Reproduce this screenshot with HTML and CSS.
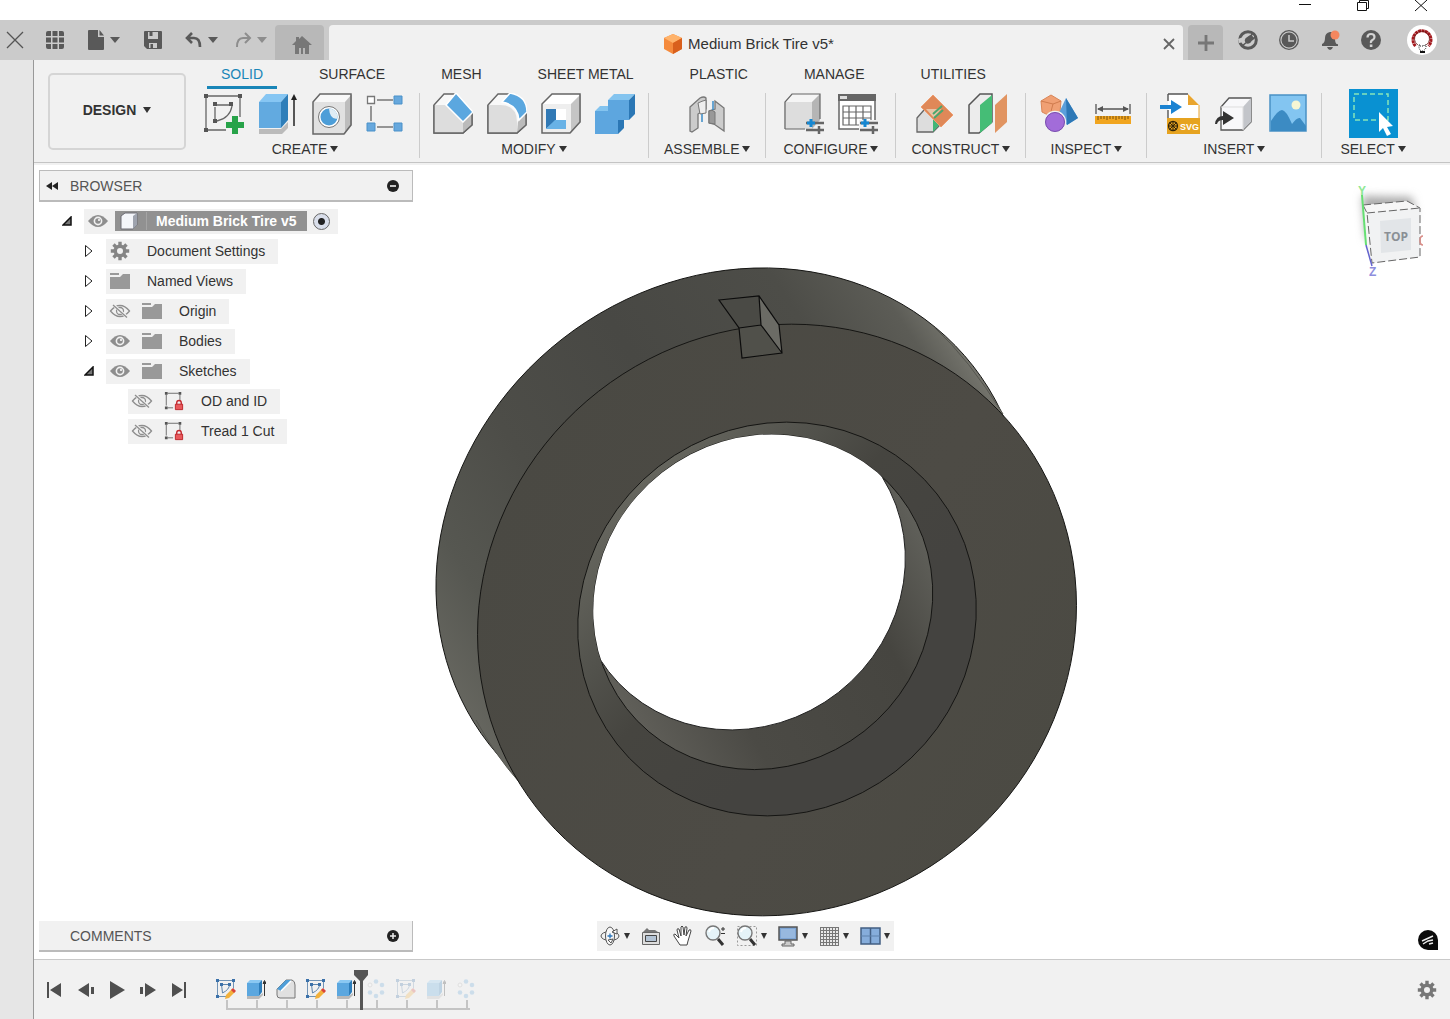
FILE: index.html
```html
<!DOCTYPE html>
<html lang="en">
<head>
<meta charset="utf-8">
<meta name="viewport" content="width=device-width, initial-scale=1">
<title>Medium Brick Tire v5*</title>
<link rel="stylesheet" href="styles.css">
</head>
<body>
<svg class="defs" aria-hidden="true">
  <symbol id="eye" viewBox="0 0 22 20"><path d="M1 10Q6 4 11 4T21 10Q16 16 11 16T1 10Z" fill="#8e8e8e"/><circle cx="11" cy="10" r="4.400" fill="#f1f1f1"/><circle cx="11" cy="10" r="2.800" fill="#8e8e8e"/><circle cx="12" cy="9" r="1" fill="#fff"/></symbol>
  <symbol id="eye-off" viewBox="0 0 22 20"><path d="M1.500 10Q6 4.500 11 4.500T20.500 10Q16 15.500 11 15.500T1.500 10Z" fill="none" stroke="#8e8e8e" stroke-width="1.300"/><circle cx="11" cy="10" r="3.500" fill="none" stroke="#8e8e8e" stroke-width="1.300"/><path d="M4 3.500 19 17" stroke="#f1f1f1" stroke-width="3"/><path d="M4 4 18 16.500" stroke="#8e8e8e" stroke-width="1.300"/></symbol>
  <symbol id="folder" viewBox="0 0 22 20"><path d="M1 2h9v2H1zM1 6h10l3-3h7v15H1z" fill="#999"/></symbol>
  <symbol id="gear" viewBox="0 0 20 20"><g fill="currentColor"><path fill-rule="evenodd" d="M10 3.500a6.500 6.500 0 1 0 0 13a6.500 6.500 0 1 0 0-13zM10 7a3 3 0 1 1 0 6a3 3 0 1 1 0-6z"/><g id="teeth"><path d="M8.300 0.800h3.400v3.500H8.300zM8.300 15.700h3.400v3.500H8.300zM.8 8.300h3.500v3.400H.8zM15.700 8.300h3.500v3.400h-3.500z"/></g><use href="#teeth" transform="rotate(45 10 10)"/></g></symbol>
  <symbol id="sketch-locked" viewBox="0 0 22 22"><path d="M4 2.500h12M2.500 4v12M17.500 4v7M4 18.500h6" stroke="#666" fill="none"/><path d="M1 1h3v3H1zM16 1h3v3h-3zM1 17h3v3H1z" fill="#555"/><path d="M14 15v-2q0-2.500 2.500-2.500T19 13v2" fill="none" stroke="#c5272d" stroke-width="1.500"/><path d="M12.500 14.500h8v6h-8z" fill="#e8595c" stroke="#b92026"/></symbol>
  <symbol id="tl-sketch" viewBox="0 0 20 20"><path d="M1.500 1.500h16v8M1.500 1.500v16h9" fill="none" stroke="#7193b5"/><path d="M5.500 5.500h8q0 5-7 8.500z" fill="none" stroke="#5d84ac"/><path d="M0 0h3v3H0zM16 0h3v3h-3zM0 16h3v3H0zM4 4h3v3H4zM12 4h3v3h-3z" fill="#3a71aa"/><path d="m10 16 6-6 3 3-6 6-4 1z" fill="#f2b13c"/><path d="m15 11 2-2 3 3-2 2z" fill="#d9423a"/></symbol>
  <symbol id="tl-extrude" viewBox="0 0 20 20"><path d="M1 17h12l4-3v2l-4 4H1z" fill="#b9b9b9"/><path d="M1 4h12v13H1z" fill="#5ba7df"/><path d="m1 4 3-3h12l-3 3z" fill="#8ac8f2"/><path d="m13 4 3-3v12l-3 4z" fill="#2c7dbb"/><path d="M18.500 17V3M17 4.500l1.500-3 1.500 3z" stroke="#333" fill="#333"/></symbol>
  <symbol id="tl-chamfer" viewBox="0 0 20 20"><path d="M1 10 10 1h6q3 1 3 5v13H4q-3 0-3-3z" fill="#e0e0e0" stroke="#777"/><path d="m1 10 9-9h5L5 12z" fill="#4f9fd9"/><path d="m5 12 10-10" stroke="#fff" stroke-width="1.500"/></symbol>
  <symbol id="tl-pattern" viewBox="0 0 20 20"><g fill="#63a6d9"><circle cx="10" cy="2.500" r="2.300"/><circle cx="16" cy="6" r="2.300"/><circle cx="16" cy="13.500" r="2.300"/><circle cx="10" cy="17" r="2.300"/><circle cx="4" cy="13.500" r="2.300"/></g><circle cx="4" cy="6" r="2" fill="#fff" stroke="#aaa"/></symbol>
  <symbol id="magnifier" viewBox="0 0 22 22"><path d="m14 14 5 6" stroke="#333" stroke-width="3"/><circle cx="9" cy="8" r="7" fill="#e5f3f8" stroke="#777" stroke-width="1.400"/><path d="M5 7q1-4 5-4" fill="none" stroke="#fff" stroke-width="2"/></symbol>
  <linearGradient id="tread" x1="460" y1="740" x2="1000" y2="390" gradientUnits="userSpaceOnUse"><stop offset="0" stop-color="#6a6a63"/><stop offset=".15" stop-color="#565751"/><stop offset=".32" stop-color="#4d4d48"/><stop offset=".55" stop-color="#484844"/><stop offset=".8" stop-color="#4d4d48"/><stop offset=".93" stop-color="#5c5c56"/><stop offset="1" stop-color="#7a7a72"/></linearGradient>
  <linearGradient id="face" x1="500" y1="500" x2="1050" y2="800" gradientUnits="userSpaceOnUse"><stop offset="0" stop-color="#4a4943"/><stop offset=".6" stop-color="#4d4b45"/><stop offset="1" stop-color="#4b4a43"/></linearGradient>
  <linearGradient id="chamfer" x1="580" y1="520" x2="800" y2="720" gradientUnits="userSpaceOnUse"><stop offset="0" stop-color="#6a6a62"/><stop offset=".35" stop-color="#53534d"/><stop offset=".6" stop-color="#464540"/><stop offset="1" stop-color="#444340"/></linearGradient>
  <linearGradient id="bore" x1="610" y1="700" x2="930" y2="530" gradientUnits="userSpaceOnUse"><stop offset="0" stop-color="#62615b"/><stop offset=".3" stop-color="#4b4a45"/><stop offset=".75" stop-color="#464540"/><stop offset="1" stop-color="#62625c"/></linearGradient>
</svg>

<div class="app">
  <header class="window-bar">
    <button type="button" aria-label="Minimize"><svg width="14" height="12" viewBox="0 0 14 12"><path d="M1 4.500h12" stroke="#111"/></svg></button>
    <button type="button" aria-label="Restore"><svg width="14" height="12" viewBox="0 0 14 12"><path d="M1.500 2.500h9v8h-9zM3.500 2V.5h9v8H11" fill="none" stroke="#111"/></svg></button>
    <button type="button" aria-label="Close window"><svg width="14" height="12" viewBox="0 0 14 12"><path d="m1 0 12 11M13 0 1 11" stroke="#111"/></svg></button>
  </header>

  <div class="tab-bar">
    <div class="quick-tools">
      <button type="button" class="quick quick-close" aria-label="Close panel"><svg width="18" height="18" viewBox="0 0 18 18"><path d="m1 1 16 16M17 1 1 17" stroke="#555" stroke-width="1.300"/></svg></button>
      <button type="button" class="quick" aria-label="Data panel"><svg width="18" height="18" viewBox="0 0 18 18"><path fill="#595959" d="M0 2q0-2 2-2h3v5H0zM6.500 0h5v5h-5zM13 0h3q2 0 2 2v3h-5zM0 6.500h5v5H0zM6.500 6.500h5v5h-5zM13 6.500h5v5h-5zM0 13h5v5H2q-2 0-2-2zM6.500 13h5v5h-5zM13 13h5v3q0 2-2 2h-3z"/></svg></button>
      <button type="button" class="quick" aria-label="File"><svg width="18" height="20" viewBox="0 0 18 20"><path fill="#595959" d="M1 1q0-1 1-1h9v7h6v12q0 1-1 1H2q-1 0-1-1zM12.500 0 17 5.500h-4.500z"/></svg><span class="caret large"></span></button>
      <button type="button" class="quick" aria-label="Save"><svg width="18" height="18" viewBox="0 0 18 18"><path fill="#595959" fill-rule="evenodd" d="M1 0h16q1 0 1 1v16q0 1-1 1H3l-3-3V1q0-1 1-1zM4 1h10v7H4zM5 12h8v5H5z"/><path fill="#595959" d="M5.500 1h3v4h-3zM6.500 13h2.500v4H6.500z"/></svg></button>
      <button type="button" class="quick" aria-label="Undo"><svg width="18" height="18" viewBox="0 0 18 18"><path d="m7 2-5 5 5 5M2 7h7q6 0 6 9" fill="none" stroke="#595959" stroke-width="2.600"/></svg><span class="caret large"></span></button>
      <button type="button" class="quick muted" aria-label="Redo"><svg width="18" height="18" viewBox="0 0 18 18"><path d="m11 2 5 5-5 5M16 7H9q-6 0-6 9" fill="none" stroke="#8d8d8d" stroke-width="2"/></svg><span class="caret large"></span></button>
    </div>
    <button type="button" class="side-tab home-tab" aria-label="Home"><svg width="20" height="18" viewBox="0 0 20 18"><path fill="#777" d="M10 0 20 9h-3v9h-4v-6h-2v6H9v-6H7v6H3V9H0l4-4V1h3v2z"/></svg></button>
    <div class="doc-tab">
      <span class="doc-title"><svg width="20" height="20" viewBox="0 0 20 20"><path fill="#f58a3c" d="m10 0 9 4v11l-9 5-9-5V4z"/><path fill="#ffb36b" d="m10 0 9 4-9 5-9-5z"/><path fill="#d9601d" d="M10 9v11l9-5V4z"/></svg>Medium Brick Tire v5*</span>
      <button type="button" class="doc-close" aria-label="Close document"><svg width="12" height="12" viewBox="0 0 12 12"><path d="m1 1 10 10M11 1 1 11" stroke="#666" stroke-width="1.800"/></svg></button>
    </div>
    <button type="button" class="side-tab add-tab" aria-label="New document"><svg width="16" height="16" viewBox="0 0 16 16"><path d="M8 0v16M0 8h16" stroke="#777" stroke-width="2.800"/></svg></button>
    <div class="account">
      <button type="button" aria-label="Extensions"><svg width="20" height="20" viewBox="0 0 20 20"><circle cx="10" cy="10" r="8.300" fill="none" stroke="#595959" stroke-width="3"/><path d="M0 9 8 6l-2 6-5 1z" fill="#ccc"/><path d="m7 8 4-4q2-1 4 1t1 4l-4 4q-3 2-5 0t0-5z" fill="#ccc"/><path d="m8 9 4-3q2 0 3 2l-3 4q-3 2-4 0t0-3zM12 7l3-4M14 10l4-4M9 12l-5 4" fill="#595959" stroke="#595959" stroke-width="1.600"/></svg></button>
      <button type="button" aria-label="Job status"><svg width="20" height="20" viewBox="0 0 20 20"><circle cx="10" cy="10" r="9.300" fill="none" stroke="#595959" stroke-width="1.300"/><circle cx="10" cy="10" r="7.500" fill="#595959"/><path d="M10 5v6h5" fill="none" stroke="#ccc" stroke-width="1.500"/></svg></button>
      <button type="button" aria-label="Notifications"><svg width="20" height="20" viewBox="0 0 20 20"><path d="M2 16v-2q3-1 3-6t5-6 5 6 3 6v2z" fill="#595959"/><path d="M7 17h6q-1 3-3 3t-3-3z" fill="#595959"/><circle cx="15" cy="5" r="4.500" fill="#f5875f"/></svg></button>
      <button type="button" aria-label="Help"><svg width="20" height="20" viewBox="0 0 20 20"><circle cx="10" cy="10" r="10" fill="#595959"/><path d="M6.500 7.500q0-3.500 3.500-3.500t3.500 3q0 2-2 3t-1.500 3" fill="none" stroke="#d4d4d4" stroke-width="2.200"/><path d="M8.800 14.500h2.600V17H8.800z" fill="#d4d4d4"/></svg></button>
      <button type="button" class="avatar" aria-label="Account"><svg width="30" height="30" viewBox="0 0 30 30"><circle cx="15" cy="15" r="15" fill="#fff"/><path d="M8.500 21A9 9 0 1 1 21.500 21" fill="none" stroke="#a3191e" stroke-width="3" stroke-dasharray="3 .4"/><path d="M11 20A7.500 7.500 0 1 1 19 20" fill="none" stroke="#611" stroke-width=".7"/><path d="M12 20h1v1h4v-1h2v3q-2 3-4 3t-3-3z" fill="none" stroke="#222" stroke-dasharray="1 1"/><path d="M13 26h5v2h-5z" fill="#111"/></svg></button>
    </div>
  </div>

  <div class="shell">
    <aside class="gutter"></aside>
    <div class="editor">
      <section class="ribbon">
        <button type="button" class="workspace">DESIGN <span class="caret"></span></button>
        <div class="ribbon-body">
          <nav class="ribbon-tabs">
            <button type="button" class="ribbon-tab active">SOLID</button>
            <button type="button" class="ribbon-tab">SURFACE</button>
            <button type="button" class="ribbon-tab">MESH</button>
            <button type="button" class="ribbon-tab">SHEET METAL</button>
            <button type="button" class="ribbon-tab">PLASTIC</button>
            <button type="button" class="ribbon-tab">MANAGE</button>
            <button type="button" class="ribbon-tab">UTILITIES</button>
          </nav>
          <div class="groups">
            <div class="group">
              <div class="tools">
                <button type="button" aria-label="Create sketch"><svg class="tool" viewBox="0 0 40 42"><path d="M4 3h31M2 5v30M36 5v19M4 37h18" stroke="#666" fill="none" stroke-width="1.300"/><path d="M13 12h13M11 14v12M28 13q-2 12-15 15" stroke="#666" fill="none" stroke-width="1.300"/><path d="M0 1h4v4H0zM34 1h4v4h-4zM0 35h4v4H0zM9 9h4v4H9zM25 9h4v4h-4zM9 26h4v4H9z" fill="#555"/><path d="M28 23h6v6h6v6h-6v6h-6v-6h-6v-6h6z" fill="#27a349"/></svg></button>
                <button type="button" aria-label="Extrude"><svg class="tool" viewBox="0 0 40 42"><path d="M1 36h22l7-7v6l-6 6H1z" fill="#bbb"/><path d="M1 9h22v26H1z" fill="#62aae0"/><path d="m1 9 7-8h22l-7 8z" fill="#86c6f3"/><path d="m23 9 7-8v26l-7 8z" fill="#2e7eb9"/><path d="M36 33V5" stroke="#222" stroke-width="1.500"/><path d="m36 1 3 6h-6z" fill="#222"/></svg></button>
                <button type="button" aria-label="Hole"><svg class="tool" viewBox="0 0 40 42"><path d="M1 9h32v32H1z" fill="#e1e1e1"/><path d="m1 9 7-8h32l-7 8z" fill="#f8f8f8"/><path d="m33 9 7-8v31l-7 9z" fill="#bdbdbd"/><path d="m1 9 7-8h31v31l-7 9H1z" fill="none" stroke="#666" stroke-width="1.500"/><circle cx="17" cy="24" r="10.500" fill="#fff" stroke="#777"/><circle cx="17" cy="24" r="8.500" fill="#4d9ed8"/><path d="M17 15.500a8.500 8.500 0 0 1 8.500 10Q18 27 17 15.500" fill="#e0edf5"/></svg></button>
                <button type="button" aria-label="Pattern"><svg class="tool" viewBox="0 0 40 42"><path d="M11 7h16M5 13v15M11 34h16" stroke="#777" stroke-width="1.500"/><path d="M1.500 3.500h7v7h-7z" fill="#fff" stroke="#777" stroke-width="1.300"/><path d="M28 3h8v8h-8zM1 30h8v8H1zM28 30h8v8h-8z" fill="#67a8dd" stroke="#4a91c9"/></svg></button>
              </div>
              <button type="button" class="group-label">CREATE <span class="caret"></span></button>
            </div>
            <div class="group">
              <div class="tools">
                <button type="button" aria-label="Chamfer"><svg class="tool" viewBox="0 0 40 42"><path d="M1 12 11 1h10l18 19v12l-9 8H1z" fill="#f8f8f8" stroke="#666" stroke-width="1.400"/><path d="M1 12h12l17 16v12H1z" fill="#ddd"/><path d="m30 28 9-9v13l-9 8z" fill="#bbb"/><path d="M1 12v28h29l9-8V20" fill="none" stroke="#666" stroke-width="1.400"/><path d="m13 12 10-12 17 19-10 10z" fill="#5ba7df" stroke="#fff" stroke-width="1.500"/></svg></button>
                <button type="button" aria-label="Fillet"><svg class="tool" viewBox="0 0 40 42"><path d="M1 12 11 1h12q16 2 16 19v12l-9 8H1z" fill="#f8f8f8" stroke="#666" stroke-width="1.400"/><path d="M1 12h12q17 0 17 17v11H1z" fill="#ddd"/><path d="m31 28 8-8v12l-9 8z" fill="#bbb"/><path d="M1 12v28h29l9-8V20" fill="none" stroke="#666" stroke-width="1.400"/><path d="m15 9 8-9q17 3 17 19l-8 8q-1-15-17-18z" fill="#5ba7df" stroke="#fff" stroke-width="1.500"/></svg></button>
                <button type="button" aria-label="Shell"><svg class="tool" viewBox="0 0 40 42"><path d="M1 11h29v29H1z" fill="#eee"/><path d="m1 11 10-10h29l-10 10z" fill="#fff"/><path d="m30 11 10-10v28l-10 11z" fill="#c5c5c5"/><path d="M1 11 11 1h28v28L29 40H1z" fill="none" stroke="#666" stroke-width="1.500"/><path d="M5 16h20v20H5z" fill="#fff"/><path d="M5 16h10v11l-10 9z" fill="#3179b5"/><path d="m5 36 9-9h11v9z" fill="#68b2e6"/></svg></button>
                <button type="button" aria-label="Combine"><svg class="tool" viewBox="0 0 40 42"><path d="M0 18h13V7h21v20H23v14H0z" fill="#5da6df"/><path d="m0 18 5-5h8v5zM13 7l6-6h21l-6 6z" fill="#84c4ef"/><path d="m34 7 6-6v20l-6 6zM23 27h6v8l-6 6z" fill="#2b77b5"/></svg></button>
              </div>
              <button type="button" class="group-label">MODIFY <span class="caret"></span></button>
            </div>
            <div class="group">
              <div class="tools">
                <button type="button" aria-label="Joint"><svg class="tool" viewBox="0 0 40 42"><path d="m3 14 10-9q4-2 6 0v11l-8 5v14l-6 4-2-1z" fill="#ccc" stroke="#777" stroke-width="1.300"/><path d="M11 10q4-2 8-3v13l-6 1z" fill="#eee" stroke="#777"/><path d="m28 8 9 7v23l-10-7-5-1V18l6-2z" fill="#ccc" stroke="#777" stroke-width="1.300"/><path d="M22 18q3-2 6 1v12l-6-1z" fill="#999" stroke="#777"/><path d="M15 21v8M26 8v9" stroke="#3b8cc8" stroke-width="1.500"/></svg></button>
              </div>
              <button type="button" class="group-label">ASSEMBLE <span class="caret"></span></button>
            </div>
            <div class="group configure-group">
              <div class="tools">
                <button type="button" aria-label="Configure"><svg class="tool" viewBox="0 0 40 42"><path d="M0 9h28v27H0z" fill="#ddd"/><path d="m0 9 8-8h28l-8 8z" fill="#f5f5f5"/><path d="m28 9 8-8v26l-8 9z" fill="#b5b5b5"/><path d="M1 36V9l7-8h28v25M1 36h20" fill="none" stroke="#666" stroke-width="1.200"/><path d="M22 30h18M22 37h18" stroke="#666" stroke-width="2.500"/><path d="M35 33v8" stroke="#666" stroke-width="2.500"/><path d="M27 26v8M23 30h8" stroke="#1687d1" stroke-width="3"/></svg></button>
                <button type="button" aria-label="Configuration table"><svg class="tool" viewBox="0 0 40 42"><path d="M1 7h36v29H1z" fill="#fff" stroke="#666" stroke-width="1.500"/><path d="M0 1h38v7H0z" fill="#666"/><path d="M2 3h7v3H2z" fill="#ddd"/><path d="M5 13h28v19H5zM5 19h28M5 25h28M11 13v19M18 13v19M25 13v19" fill="none" stroke="#666" stroke-width="1.200"/><path d="M21 27h19v15H21z" fill="#f1f1f1"/><path d="M22 30h18M22 37h18M35 33v8" stroke="#666" stroke-width="2.500"/><path d="M27 26v8M23 30h8" stroke="#1687d1" stroke-width="3"/></svg></button>
              </div>
              <button type="button" class="group-label">CONFIGURE <span class="caret"></span></button>
            </div>
            <div class="group">
              <div class="tools">
                <button type="button" aria-label="Offset plane"><svg class="tool" viewBox="0 0 40 42"><path d="m3 25 7-8h15v16l-6 6H3z" fill="#ddd" stroke="#666" stroke-width="1.300"/><path d="m19 25 8-10v15l-8 9z" fill="#43b577"/><path d="M19 2 39 22 27 34 7 14z" fill="#df8858" stroke="#ee9d70"/><path d="M12 16h15l-7 9z" fill="#e8c4a6"/><path d="m19 21 9-8M20 25l9-8" stroke="#4ba76d" stroke-width="2"/></svg></button>
                <button type="button" aria-label="Midplane"><svg class="tool" viewBox="0 0 40 42"><path d="M1 12 12 1h12v28l-13 11H1z" fill="#ececec" stroke="#555" stroke-width="1.500"/><path d="m12 12 12-10v28L12 40z" fill="#45bd76"/><path d="m27 12 12-11v28L27 40z" fill="#e19461"/></svg></button>
              </div>
              <button type="button" class="group-label">CONSTRUCT <span class="caret"></span></button>
            </div>
            <div class="group">
              <div class="tools">
                <button type="button" aria-label="Inspect shapes"><svg class="tool" viewBox="0 0 40 42"><path d="m2 8 10-6 10 6-1 11-10 4-8-4z" fill="#f0a074" stroke="#d98557"/><path d="m2 8 12 3 8-3M14 11l-3 11" stroke="#d07c4e" fill="none"/><path d="m27 5 12 20-11 7-9-10z" fill="#5b9fdb"/><path d="m27 5 12 20-11 7z" fill="#2d78b6"/><circle cx="16" cy="29" r="10.500" fill="#a26cd9" stroke="#f1f1f1" stroke-width="1.500"/><circle cx="16" cy="29" r="9.500" fill="none" stroke="#7a4fae"/></svg></button>
                <button type="button" aria-label="Measure"><svg class="tool" viewBox="0 0 40 42"><path d="M3 11v10M37 11v10M5 16h30" stroke="#555" stroke-width="1.300"/><path d="m4 16 6-3v6zM36 16l-6-3v6z" fill="#555"/><path d="M2 23h36v8H2z" fill="#f1a51f"/><path d="M5 23v4M8 23v3M11 23v3M14 23v4M17 23v3M20 23v3M23 23v4M26 23v3M29 23v3M32 23v4M35 23v3" stroke="#784e0b"/></svg></button>
              </div>
              <button type="button" class="group-label">INSPECT <span class="caret"></span></button>
            </div>
            <div class="group">
              <div class="tools">
                <button type="button" aria-label="Insert SVG"><svg class="tool" viewBox="0 0 40 42"><path d="M8 1h20l11 11v28H8z" fill="#fff"/><path d="M8 1h20M8 1v7M8 17v8" stroke="#555" stroke-width="1.400"/><path d="M28 1v11h11z" fill="#e9a52e"/><path d="M7 25h33v16H7z" fill="#e6a320"/><path d="M39 12v14" stroke="#e9a52e"/><path d="M0 12h11V7l11 7-11 7v-5H0z" fill="#1b83d2"/><circle cx="13" cy="33" r="4.500" fill="none" stroke="#332509" stroke-width="1.300"/><path d="M8 33h10M13 28v10M9.500 29.500l7 7M16.500 29.500l-7 7" stroke="#332509"/><text x="20" y="37" class="badge-text">SVG</text></svg></button>
                <button type="button" aria-label="Insert derive"><svg class="tool" viewBox="0 0 40 42"><path d="m7 14 8-9h22v24l-8 8H7z" fill="#f8f8fa" stroke="#555" stroke-width="1.300"/><path d="m29 14 8-9v24l-8 8z" fill="#c3c5ca"/><path d="M7 14h22v23" stroke="#ddd" fill="none"/><path d="M1 31q1-8 8-8v-5l11 7-11 7v-5q-5 0-6 4z" fill="#333"/></svg></button>
                <button type="button" aria-label="Insert image"><svg class="tool" viewBox="0 0 40 42"><path d="M2 2h36v36H2z" fill="#83c5f1" stroke="#4991c5" stroke-width="1.500"/><circle cx="28" cy="12" r="4.500" fill="#f6f6d4"/><path d="M3 28q7-11 11-11t10 14q5-7 8-6l6 8v5H3z" fill="#3c8bc3"/></svg></button>
              </div>
              <button type="button" class="group-label">INSERT <span class="caret"></span></button>
            </div>
            <div class="group select-group">
              <div class="tools">
                <button type="button" aria-label="Select"><svg class="select-icon" viewBox="0 0 49 49"><path d="M0 0h49v49H0z" fill="#0991d2"/><path d="M5 5h34v26H5z" fill="none" stroke="#87e5b9" stroke-width="1.500" stroke-dasharray="5 3"/><path d="m30 23 14 14-6 1 4 7-4 2-4-8-4 4z" fill="#fff"/></svg></button>
              </div>
              <button type="button" class="group-label">SELECT <span class="caret"></span></button>
            </div>
          </div>
        </div>
      </section>

      <main class="canvas">
        <svg class="model" viewBox="34 165 1416 794" role="img" aria-label="Tire model">
          <g stroke="#151513" stroke-width="1">
            <path d="M489 744.100A307 274 -38 0 1 973 365.900A307 274 -38 0 1 489 744.100Z" fill="url(#tread)"/>
            <path d="M935 328Q968 358 1003 414L520 783Q495 755 476 720Z" fill="url(#tread)" stroke="none"/>
            <path d="M935 328Q968 358 1003 414M520 783Q495 755 476 720" fill="none" stroke="#55554f"/>
            <path d="M536.600 807.800A305 290 -38 0 1 1017.400 432.200A305 290 -38 0 1 536.600 807.800Z" fill="url(#face)"/>
            <path d="M617 744A203 193 -38 0 1 937 494A203 193 -38 0 1 617 744Z" fill="url(#chamfer)"/>
            <path d="M626.600 708.600A173 164 -38 0 1 899.400 495.400A173 164 -38 0 1 626.600 708.600Z" fill="url(#bore)"/>
          </g>
          <clipPath id="opening"><path d="M626.600 708.600A173 164 -38 0 1 899.400 495.400A173 164 -38 0 1 626.600 708.600Z"/></clipPath>
          <g clip-path="url(#opening)"><path d="M608.600 671.500A168 158 -38 0 1 873.400 464.500A168 158 -38 0 1 608.600 671.500Z" fill="#fff" stroke="#222"/></g>
          <path d="M719 300 759 296 779 325 782 353 742 358 739 328Z" fill="#50504a"/>
          <path d="M719 300 759 296 761 325 739 328Z" fill="#4a4a45"/>
          <path d="M759 296 779 325 782 353 761 325Z" fill="#6b6b65"/>
          <path d="M719 300 759 296 779 325 782 353 742 358 739 328ZM759 296 761 325 782 353M739 328 761 325" fill="none" stroke="#0c0c0c" stroke-width="1.200"/>
        </svg>

        <section class="browser">
          <header class="panel-head">
            <svg width="13" height="10" viewBox="0 0 13 10"><path d="M6 1v8L0 5zM12 1v8L6 5z" fill="#222"/></svg>
            <h2>BROWSER</h2>
            <button type="button" aria-label="Collapse browser"><svg width="12" height="12" viewBox="0 0 12 12"><circle cx="6" cy="6" r="6" fill="#222"/><path d="M3 6h6" stroke="#ddd" stroke-width="1.800"/></svg></button>
          </header>
          <ul class="tree">
            <li>
              <div class="row"><span class="expander"><svg width="10" height="10" viewBox="0 0 10 10"><path d="M9 1v8H1z" fill="#777" stroke="#111" stroke-width="1.500"/></svg></span>
                <div class="pill root"><svg class="node"><use href="#eye"/></svg><span class="root-name"><svg width="18" height="18" viewBox="0 0 18 18"><path d="m1 4 4-3h12v12l-4 4H1z" fill="#f4f6fa" stroke="#6c6c75"/><path d="m13 4 4-3v12l-4 4z" fill="#9ea3ae"/></svg><b>Medium Brick Tire v5</b></span><input type="radio" name="active" checked aria-label="Activate Medium Brick Tire v5"></div></div>
              <ul>
                <li class="row"><span class="expander"><svg width="10" height="14" viewBox="0 0 10 14"><path d="M1.500 1.500 8 7l-6.500 5.500z" fill="#fff" stroke="#222"/></svg></span><div class="pill"><svg class="node gear"><use href="#gear"/></svg><span>Document Settings</span></div></li>
                <li class="row"><span class="expander"><svg width="10" height="14" viewBox="0 0 10 14"><path d="M1.500 1.500 8 7l-6.500 5.500z" fill="#fff" stroke="#222"/></svg></span><div class="pill"><svg class="node"><use href="#folder"/></svg><span>Named Views</span></div></li>
                <li class="row"><span class="expander"><svg width="10" height="14" viewBox="0 0 10 14"><path d="M1.500 1.500 8 7l-6.500 5.500z" fill="#fff" stroke="#222"/></svg></span><div class="pill"><svg class="node sight"><use href="#eye-off"/></svg><svg class="node"><use href="#folder"/></svg><span>Origin</span></div></li>
                <li class="row"><span class="expander"><svg width="10" height="14" viewBox="0 0 10 14"><path d="M1.500 1.500 8 7l-6.500 5.500z" fill="#fff" stroke="#222"/></svg></span><div class="pill"><svg class="node sight"><use href="#eye"/></svg><svg class="node"><use href="#folder"/></svg><span>Bodies</span></div></li>
                <li>
                  <div class="row"><span class="expander"><svg width="10" height="10" viewBox="0 0 10 10"><path d="M9 1v8H1z" fill="#777" stroke="#111" stroke-width="1.500"/></svg></span><div class="pill"><svg class="node sight"><use href="#eye"/></svg><svg class="node"><use href="#folder"/></svg><span>Sketches</span></div></div>
                  <ul>
                    <li class="row"><span class="expander"></span><div class="pill"><svg class="node sight"><use href="#eye-off"/></svg><svg class="node"><use href="#sketch-locked"/></svg><span>OD and ID</span></div></li>
                    <li class="row"><span class="expander"></span><div class="pill"><svg class="node sight"><use href="#eye-off"/></svg><svg class="node"><use href="#sketch-locked"/></svg><span>Tread 1 Cut</span></div></li>
                  </ul>
                </li>
              </ul>
            </li>
          </ul>
        </section>

        <svg class="view-cube" width="80" height="110" viewBox="1350 175 80 110" role="img" aria-label="View cube">
          <defs><filter id="soft" x="-30%" y="-30%" width="160%" height="160%"><feGaussianBlur stdDeviation="4"/></filter></defs>
          <path d="M1362 196 1412 197 1416 215 1366 240Z" fill="#aaa" filter="url(#soft)"/>
          <path d="M1363 205 1407 201 1420 208 1420 257 1372 263 1365 245Z" fill="#f6f6f6"/>
          <path d="M1367 213 1420 208 1420 257 1372 263Z" fill="#f1f2f3"/>
          <path d="M1380 221 1411 218 1411 250 1381 253Z" fill="#e2e5e8"/>
          <path d="M1363 205 1407 201 1420 208 1420 257 1372 263M1367 213 1420 208M1363 205 1367 213 1372 263" fill="none" stroke="#666" stroke-dasharray="8 3"/>
          <path d="M1362 195 1366 245" stroke="#65df72" stroke-width="2"/><path d="M1366 245 1372 266" stroke="#6464ce" stroke-width="1.500"/>
          <text x="1384" y="241" class="cube-label">TOP</text>
          <text x="1358" y="195" class="axis axis-y">Y</text><text x="1369" y="276" class="axis axis-z">Z</text>
          <path d="M1423 236q-3 0-3 4.500t3 4.500" stroke="#d98c87" stroke-width="1.500" fill="none"/>
        </svg>

        <section class="comments"><h2>COMMENTS</h2><button type="button" aria-label="Expand comments"><svg width="12" height="12" viewBox="0 0 12 12"><circle cx="6" cy="6" r="6" fill="#222"/><path d="M3 6h6M6 3v6" stroke="#eee" stroke-width="1.500"/></svg></button></section>

        <div class="nav-tools">
          <button type="button" aria-label="Orbit"><svg class="nav-icon" viewBox="0 0 22 22"><ellipse cx="11" cy="11" rx="9" ry="4.500" fill="none" stroke="#555"/><ellipse cx="11" cy="11" rx="4.500" ry="9" fill="#f8f8f8" stroke="#555"/><path d="M11 8.500v5M8.500 11h5" stroke="#2b76ba" stroke-width="1.300"/><path d="m13 7 5-3v5zM9 15l5-1-2 4z" fill="#fff" stroke="#555"/></svg><span class="caret"></span></button>
          <button type="button" aria-label="Look at"><svg class="nav-icon" viewBox="0 0 22 22"><path d="M3 7 7 3l2 2h6l3 2z" fill="#777"/><path d="M2.500 7.500h17v12h-17z" fill="#ddd" stroke="#666"/><path d="M5.500 10.500h11v6h-11z" fill="#b3c3d4" stroke="#444"/></svg></button>
          <button type="button" aria-label="Pan"><svg class="nav-icon" viewBox="0 0 22 22"><path d="M8 20 2 11q-1-2 1-2l4 4-2-8q0-2 2-1l2 7V2q1-2 2 0l1 8 1-8q2-1 2 1l-1 8 3-6q2-1 2 1l-3 10-1 4z" fill="#fff" stroke="#444"/></svg></button>
          <button type="button" aria-label="Zoom"><svg class="nav-icon" viewBox="0 0 22 22"><use href="#magnifier"/><path d="M17 4h4M19 2v4M17 8.500h4" stroke="#333"/></svg></button>
          <button type="button" aria-label="Fit"><svg class="nav-icon" viewBox="0 0 22 22"><path d="M1.500 1.500h19v19h-19z" fill="none" stroke="#999" stroke-dasharray="2 2"/><use href="#magnifier"/></svg><span class="caret"></span></button>
          <button type="button" aria-label="Display settings"><svg class="nav-icon" viewBox="0 0 22 22"><path d="M2 2h18v13H2z" fill="#7ea5d5" stroke="#555" stroke-width="1.500"/><path d="M4 4h14v9H4z" fill="#97b8df"/><path d="M8 16h6v3h3v2H5v-2h3z" fill="#ccc" stroke="#666"/></svg><span class="caret"></span></button>
          <button type="button" aria-label="Grid settings"><svg class="nav-icon" viewBox="0 0 22 22"><path d="M2 2h18v18H2z" fill="#e9e9e9"/><path d="M2.500 2v18M5.500 2v18M8.500 2v18M11.500 2v18M14.500 2v18M17.500 2v18M20.500 2v18M2 2.500h19M2 5.500h19M2 8.500h19M2 11.500h19M2 14.500h19M2 17.500h19M2 20.500h19" stroke="#777"/></svg><span class="caret"></span></button>
          <button type="button" aria-label="Viewports"><svg class="nav-icon" viewBox="0 0 22 22"><path d="M2 3h19v16H2z" fill="#86addb" stroke="#435f83" stroke-width="1.500"/><path d="M11.500 3v16" stroke="#435f83" stroke-width="1.500"/><path d="M2 11h19" stroke="#5f82ad"/></svg><span class="caret"></span></button>
        </div>

        <button type="button" class="assistant" aria-label="Assistant"><svg width="20" height="20" viewBox="0 0 20 20"><path d="M10 0a10 10 0 0 1 10 10v10H10A10 10 0 0 1 10 0z" fill="#0b0b0b"/><path d="m4 11 11-5M5 14l5-3 5-1M11 14l4-1" stroke="#eee" fill="none" stroke-width="1.400"/></svg></button>
      </main>

      <footer class="timeline">
        <div class="playback">
          <button type="button" aria-label="Go to start"><svg class="play" viewBox="0 0 18 18"><path d="M2 1h2v16H2zM16 2v14L5 9z" fill="#4f4f4f"/></svg></button>
          <button type="button" aria-label="Step back"><svg class="play" viewBox="0 0 18 18"><path d="M13 2v14L2 9zM15 6h3v7h-3z" fill="#4f4f4f"/></svg></button>
          <button type="button" aria-label="Play"><svg class="play" viewBox="0 0 18 18"><path d="m3 0 15 9-15 9z" fill="#4f4f4f"/></svg></button>
          <button type="button" aria-label="Step forward"><svg class="play" viewBox="0 0 18 18"><path d="m7 2 11 7-11 7zM2 6h3v7H2z" fill="#4f4f4f"/></svg></button>
          <button type="button" aria-label="Go to end"><svg class="play" viewBox="0 0 18 18"><path d="M15 1h2v16h-2zM3 2v14l11-7z" fill="#4f4f4f"/></svg></button>
        </div>
        <ol class="features">
          <li><svg><use href="#tl-sketch"/></svg></li>
          <li><svg><use href="#tl-extrude"/></svg></li>
          <li><svg><use href="#tl-chamfer"/></svg></li>
          <li><svg><use href="#tl-sketch"/></svg></li>
          <li class="current"><svg><use href="#tl-extrude"/></svg><svg class="marker" viewBox="0 0 16 40"><path d="M1 0h14v5l-5 6v29H7V11L1 5z" fill="#555"/></svg></li>
          <li class="rolled"><svg><use href="#tl-pattern"/></svg></li>
          <li class="rolled"><svg><use href="#tl-sketch"/></svg></li>
          <li class="rolled"><svg><use href="#tl-extrude"/></svg></li>
          <li class="rolled"><svg><use href="#tl-pattern"/></svg></li>
        </ol>
        <button type="button" class="settings" aria-label="Timeline settings"><svg width="20" height="20"><use href="#gear"/></svg></button>
      </footer>
    </div>
  </div>
</div>
</body>
</html>
```
FILE: styles.css
```css
* { box-sizing: border-box; }

body {
  margin: 0;
  font: 14px/18px "Liberation Sans", Arial, sans-serif;
  color: #333;
  background: #fff;
}

button {
  display: flex;
  align-items: center;
  justify-content: center;
  padding: 0;
  border: 0;
  background: none;
  font: inherit;
  color: inherit;
  white-space: nowrap;
}

svg { display: block; flex: none; }
h2 { margin: 0; font-size: 14px; font-weight: 400; }
ul, ol { margin: 0; padding: 0; list-style: none; }

.defs { position: absolute; width: 0; height: 0; }

.app {
  display: flex;
  flex-direction: column;
  min-height: 100vh;
}

.caret {
  border: 4px solid transparent;
  border-top: 6px solid #333;
  border-bottom: 0;
}
.caret.large { border-width: 6px 5px 0; border-top-color: #595959; }
.muted .caret.large { border-top-color: #8d8d8d; }

/* Window controls */
.window-bar {
  display: flex;
  justify-content: flex-end;
  height: 20px;
}
.window-bar button { width: 58px; height: 12px; }

/* Document tabs */
.tab-bar {
  display: flex;
  height: 40px;
  background: #cbcbcb;
}
.quick-tools { display: flex; width: 275px; }
.quick { flex: 1 1 48px; gap: 5px; }
.quick-close { flex: 0 0 30px; }
.side-tab {
  margin-top: 5px;
  border-radius: 4px 4px 0 0;
  background: #b8b8b8;
}
.home-tab { width: 49px; padding: 4px 0 0 4px; }
.add-tab { width: 35px; }
.doc-tab {
  display: flex;
  align-items: center;
  flex: 1;
  margin: 5px 5px 0;
  padding: 2px 8px 0;
  border-radius: 4px 4px 0 0;
  background: #f1f1f1;
}
.doc-title {
  display: flex;
  align-items: center;
  justify-content: center;
  flex: 1;
  gap: 5px;
  padding-right: 3px;
  font-size: 15px;
}
.account {
  display: flex;
  align-items: center;
  padding: 0 13px 0 4px;
}
.account button { width: 41px; }
.account .avatar { width: 30px; margin-left: 16px; }

/* Editor shell */
.shell { display: flex; flex: 1; }
.gutter {
  flex: none;
  width: 34px;
  border-right: 1px solid #999;
  background: #e6e6e6;
}
.editor {
  display: flex;
  flex: 1;
  flex-direction: column;
  min-width: 0;
}

/* Ribbon */
.ribbon {
  display: flex;
  height: 103px;
  border-bottom: 1px solid #c4c4c4;
  background: #f1f1f1;
}
.workspace {
  flex: none;
  width: 138px;
  height: 77px;
  margin: 13px 5px 0 14px;
  padding-bottom: 3px;
  gap: 7px;
  border: 2px solid #d5d5d5;
  border-radius: 5px;
  font-weight: 700;
}
.ribbon-tabs { display: flex; gap: 28px; padding-left: 16px; }
.ribbon-tab {
  height: 29px;
  padding: 2px 14px 0;
  border-bottom: 3px solid transparent;
}
.ribbon-tab.active { border-color: #1986b8; color: #1986b8; }
.groups { display: flex; padding-top: 4px; }
.group {
  display: flex;
  flex-direction: column;
  align-items: center;
  justify-content: space-between;
  height: 65px;
  padding: 0 13px;
  border-right: 1px solid #ccc;
}
.group:last-child { border: 0; }
.configure-group { padding: 0 15px; }
.select-group { padding: 0 16px; }
.tools { display: flex; gap: 14px; }
.tool { width: 40px; height: 42px; }
.select-icon { width: 49px; height: 49px; margin: -4px 0; }
.group-label { gap: 3px; padding: 0 2px; }
.badge-text { font: 700 9px "Liberation Sans", Arial, sans-serif; fill: #fff; }

/* Modelling canvas: overlays share one grid cell */
.canvas {
  display: grid;
  flex: 1;
  border-top: 2px solid #f1f1f1;
  background: #fff;
}
.canvas > * { grid-area: 1 / 1; }
.model { width: 100%; height: 100%; }

.browser { place-self: start; width: 374px; margin: 5px; }
.panel-head {
  display: flex;
  align-items: center;
  height: 32px;
  padding: 0 13px 0 6px;
  gap: 11px;
  border: 1px solid #bbb;
  border-bottom-width: 2px;
  background: #f1f1f1;
}
.panel-head h2, .comments h2 { flex: 1; color: #555; }

.tree { padding: 4px 0 0 11px; }
.tree ul { padding-left: 22px; }
.row { display: flex; align-items: center; height: 30px; }
.expander { display: flex; justify-content: center; flex: none; width: 34px; }
.pill {
  display: flex;
  align-items: center;
  height: 25px;
  padding: 0 13px 0 3px;
  background: #f1f1f1;
  white-space: nowrap;
}
.node { width: 22px; height: 20px; margin-right: 16px; }
.node.sight { margin-right: 10px; }
.gear { color: #858585; }
.root { padding-right: 8px; }
.root .node { margin-right: 6px; }
.root-name {
  display: flex;
  align-items: center;
  height: 20px;
  padding: 0 10px 0 5px;
  background: #919191;
  color: #fff;
}
.root-name b { margin-left: 8px; padding-left: 9px; border-left: 1px solid #a4a4a4; }
.root input {
  appearance: none;
  width: 17px;
  height: 17px;
  margin: 0 0 0 6px;
  border: 1px solid #666;
  border-radius: 50%;
  background: radial-gradient(circle, #222 3px, #d9deea 4px);
}

.view-cube { place-self: start end; margin: 10px 20px 0 0; }
.cube-label { font: 700 12px "Open Sans", "Liberation Sans", sans-serif; fill: #8a8f95; }
.axis { font: 700 12px "Liberation Sans", Arial, sans-serif; }
.axis-y { fill: #8fe894; }
.axis-z { fill: #8d8ddd; }

.comments {
  display: flex;
  align-items: center;
  place-self: end start;
  width: 374px;
  height: 31px;
  margin: 0 0 7px 5px;
  padding: 0 13px 0 31px;
  border: solid #bbb;
  border-width: 0 1px 2px 0;
  background: #f1f1f1;
}

.nav-tools {
  display: flex;
  place-self: end center;
  gap: 10px;
  height: 30px;
  margin: 0 0 8px 6px;
  padding: 0 4px 0 2px;
  background: #f1f1f1;
}
.nav-tools button { gap: 3px; }
.nav-tools .caret { border-width: 6px 3px 0; }
.nav-icon { width: 22px; height: 22px; }
.assistant { place-self: end; margin: 0 12px 9px 0; }

/* Timeline */
.timeline {
  display: flex;
  align-items: center;
  height: 60px;
  border-top: 1px solid #c9c9c9;
  background: #f1f1f1;
}
.playback { display: flex; gap: 13px; padding: 0 24px 0 11px; }
.play { width: 18px; height: 18px; }
.features { display: flex; }
.features li {
  position: relative;
  width: 30px;
  height: 42px;
  padding: 10px 5px 0;
}
.features li > svg { width: 20px; height: 20px; }
.features li::after {
  content: "";
  position: absolute;
  left: 15px;
  bottom: 1px;
  width: 30px;
  height: 8px;
  border: solid #c4c4c4;
  border-width: 0 0 2px 2px;
}
.features li:last-child::after { width: 2px; }
.features .rolled > svg { opacity: .25; }
.features li > .marker {
  position: absolute;
  z-index: 1;
  top: 1px;
  left: 22px;
  width: 16px;
  height: 40px;
}
.settings { margin: 0 13px 0 auto; color: #777; }
```
